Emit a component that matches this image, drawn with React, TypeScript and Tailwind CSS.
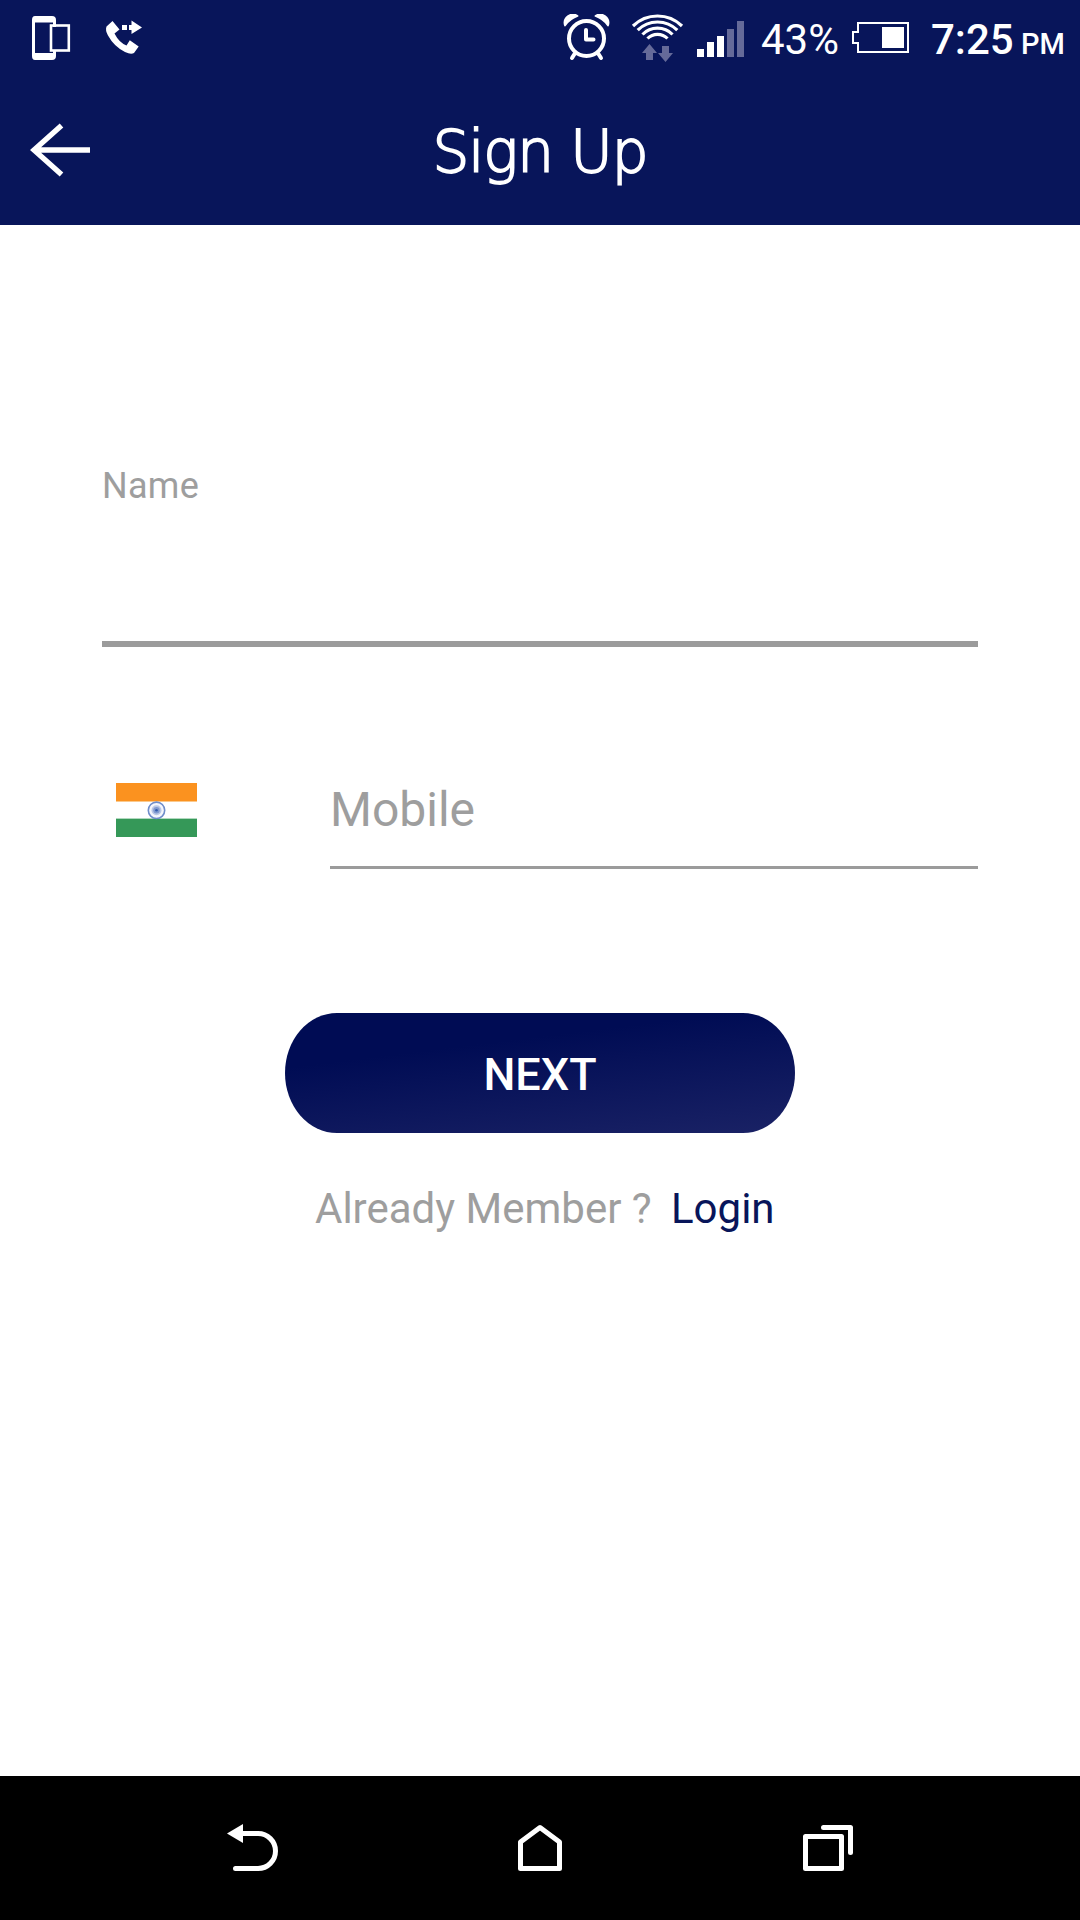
const DevicesIcon = () => (
  <svg className="shrink-0" width="40" height="48" viewBox="31 14 40 48">
    <path
      fill="#fff"
      fillRule="evenodd"
      d="M35 16h17q4 0 4 4v7h-3v-4.500H35V53h18v-2h3v5q0 4-4 4H35q-3 0-3-4V20q0-4 3-4z"
    />
    <rect x="51" y="25.500" width="17.800" height="25" fill="none" stroke="#fff" strokeWidth="2.600" />
  </svg>
)

const CallForwardIcon = () => (
  <svg className="shrink-0" width="40" height="40" viewBox="104 18 40 40" fill="#fff">
    <path d="M112.500 21L106.500 26.500Q105 30 108 35.500Q114 46.500 125 52Q131 55 134 53L138.700 46.500L129.800 40.300L126.500 45.500Q119 42.500 114.500 33.500L119.500 29.500Z" />
    <path d="M122 25h5v5h-5zM129 25h2.500v-4.500L142 27.500l-10.500 6.500V30H129z" />
  </svg>
)

const AlarmIcon = () => (
  <svg className="shrink-0" width="48" height="48" viewBox="563 14 48 48">
    <path fill="#fff" d="M565 25.500a8.300 8.300 0 0 1 12.500-9.500q-8 3-12.500 9.500zM608 25.500a8.300 8.300 0 0 0-12.500-9.500q8 3 12.500 9.500z" stroke="#fff" strokeWidth="1.800" strokeLinejoin="round" />
    <g fill="none" stroke="#fff" strokeLinecap="round">
      <circle cx="586.500" cy="38.500" r="17.500" strokeWidth="4" />
      <path d="M586 30v9.500h7.500" strokeWidth="4" strokeLinejoin="round" />
      <path d="M574.500 54l-2.500 4M598.500 54l2.500 4" strokeWidth="4" />
    </g>
  </svg>
)

const WifiIcon = () => (
  <svg className="shrink-0" width="54" height="52" viewBox="631 12 54 52">
    <g fill="none" stroke="#fff" strokeWidth="3.200">
      <path d="M633 26a35 35 0 0 1 49 0" />
      <path d="M637.700 30.200a28 28 0 0 1 39.600 0" />
      <path d="M642.500 34.500a21 21 0 0 1 30 0" />
      <path d="M647.500 38.500a14 14 0 0 1 20 0" />
    </g>
    <path fill="#656a99" d="M649.500 44l7.500 9h-4v7h-7v-7h-4zM662 46h7v7h4l-7.500 9-7.500-9h4z" />
  </svg>
)

const SignalIcon = () => (
  <div className="flex h-9 shrink-0 items-end gap-[3px]">
    <div className="h-2 w-[7px] bg-white" />
    <div className="h-[15px] w-[7px] bg-white" />
    <div className="h-[21px] w-[7px] bg-white" />
    <div className="h-7 w-[7px] bg-[#656a99]" />
    <div className="h-9 w-[7px] bg-[#656a99]" />
  </div>
)

const BatteryIcon = () => (
  <svg className="shrink-0" width="57" height="31" viewBox="852 22 57 31">
    <path fill="none" stroke="#fff" strokeWidth="2" d="M858 23h50v29h-50v-9h-5V32h5z" />
    <path fill="#fff" d="M882 27h22v21h-22z" />
  </svg>
)

const StatusBar = () => (
  <div className="flex h-[75px] items-start text-white">
    <div className="mt-[14px] ml-[31px]">
      <DevicesIcon />
    </div>
    <div className="mt-[18px] ml-[33px]">
      <CallForwardIcon />
    </div>
    <div className="mt-[14px] ml-[419px]">
      <AlarmIcon />
    </div>
    <div className="mt-3 ml-5">
      <WifiIcon />
    </div>
    <div className="mt-[21px] ml-3">
      <SignalIcon />
    </div>
    <span className="mt-4 ml-[17px] w-[91px] text-[42px] leading-[48px]">43%</span>
    <div className="mt-[22px]">
      <BatteryIcon />
    </div>
    <span className="mt-4 ml-[22px] w-[90px] text-[42px] leading-[48px] font-medium whitespace-nowrap">7:25</span>
    <span className="mt-[26px] text-[29px] leading-9 font-medium">PM</span>
  </div>
)

const Header = () => (
  <div className="grid h-[150px] grid-cols-[1fr_auto_1fr] items-start text-white">
    <svg className="mt-[47px] ml-[30px]" width="62" height="56" viewBox="30 122 62 56">
      <path d="M61.500 125.500L34 150l27.500 24.500M36 150h54" fill="none" stroke="#fff" strokeWidth="5.400" />
    </svg>
    <h1 className="mt-[37px] font-['DejaVu_Sans','DejaVu_Sans_Light',sans-serif] text-[58px] leading-[80px] font-extralight tracking-[-1px] [-webkit-text-stroke:1.8px_white]">
      Sign Up
    </h1>
  </div>
)

const Flag = () => (
  <svg className="mt-[3px] ml-[14px] shrink-0" width="81" height="54" viewBox="0 0 81 54">
    <path fill="#fb921f" d="M0 0h81v18H0z" />
    <path fill="#fbc98c" d="M0 18h81v1H0z" />
    <path fill="#b0d9be" d="M0 35h81v1H0z" />
    <path fill="#359858" d="M0 36h81v18H0z" />
    <circle cx="40.500" cy="27.300" r="8.200" fill="#f4f6fc" stroke="#6f8dca" strokeWidth="1.600" />
    <circle cx="40.500" cy="27.300" r="5" fill="#b9c7e6" />
    <circle cx="40.500" cy="27.300" r="3.200" fill="#7f99d0" />
    <circle cx="40.500" cy="27.300" r="1.300" fill="#3159ac" />
  </svg>
)

const SignUpForm = () => (
  <main className="flex h-[1551px] flex-col px-[102px] text-[#9e9e9e]">
    <div className="mt-[240px] h-[182px] border-b-[6px] border-[#9b9b9b]">
      <label className="block text-4xl leading-[42px] tracking-[0.3px]">Name</label>
    </div>
    <div className="mt-[133px] flex">
      <Flag />
      <div className="ml-auto h-[89px] w-[648px] border-b-[3px] border-[#9b9b9b]">
        <label className="block text-5xl leading-[60px]">Mobile</label>
      </div>
    </div>
    <button className="mt-36 h-[120px] w-[510px] self-center rounded-[52px/60px] bg-[linear-gradient(173deg,#000c54_30%,#1a2265_100%)] pt-1 text-[45px] leading-[52px] font-medium text-white">
      NEXT
    </button>
    <div className="mt-[51px] ml-[213px] flex text-[42px] leading-[50px] whitespace-pre">
      <span className="w-[356px]">Already Member ?</span>
      <a className="text-[#08155a]">Login</a>
    </div>
  </main>
)

const NavBar = () => (
  <nav className="flex h-36 items-start bg-black">
    <svg className="mt-[46px] ml-[225px]" width="56" height="52" viewBox="225 1822 56 52">
      <path fill="#fff" d="M227 1833.500l16-9.500v19z" />
      <path d="M242 1833.500h16a17.500 17.500 0 0 1 0 35h-22.500" fill="none" stroke="#fff" strokeWidth="5" strokeLinecap="round" />
    </svg>
    <svg className="mt-[46px] ml-[235px]" width="48" height="52" viewBox="516 1822 48 52">
      <path d="M520.500 1842l19.500-14.500 19.500 14.500v26.500h-39z" fill="none" stroke="#fff" strokeWidth="5" strokeLinejoin="round" />
    </svg>
    <svg className="mt-[46px] ml-[237px]" width="54" height="52" viewBox="801 1822 54 52">
      <g fill="none" stroke="#fff" strokeWidth="5" strokeLinecap="round" strokeLinejoin="round">
        <path d="M805.500 1836.500h36v32h-36zM823.500 1827.500h27v25" />
      </g>
    </svg>
  </nav>
)

const App = () => {
  return (
    <div className="h-[1920px] w-[1080px] overflow-hidden bg-white font-['Roboto',sans-serif]">
      <header className="bg-[#08155a]">
        <StatusBar />
        <Header />
      </header>
      <SignUpForm />
      <NavBar />
    </div>
  )
}

export default App
